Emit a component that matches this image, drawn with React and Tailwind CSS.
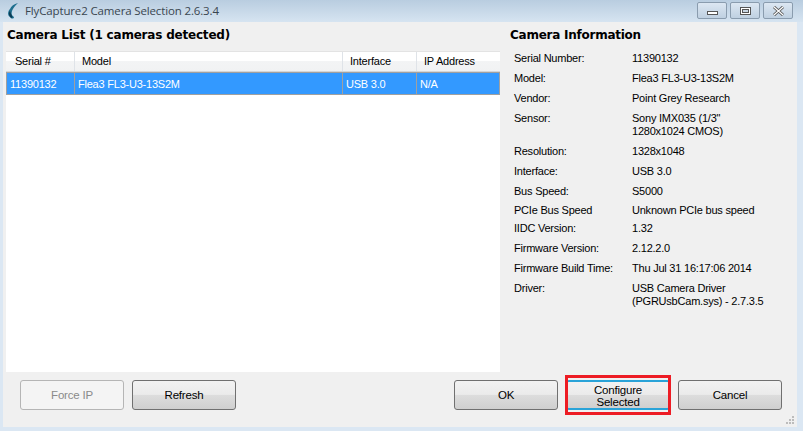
import React from "react";

const rows = [
  ["Serial Number:", "11390132", "h-[20px]"],
  ["Model:", "Flea3 FL3-U3-13S2M", "h-[20px]"],
  ["Vendor:", "Point Grey Research", "h-[20px]"],
  ["Sensor:", ["Sony IMX035 (1/3\"", "1280x1024 CMOS)"], "h-[33px]"],
  ["Resolution:", "1328x1048", "h-[20px]"],
  ["Interface:", "USB 3.0", "h-[20px]"],
  ["Bus Speed:", "S5000", "h-[19px]"],
  ["PCIe Bus Speed", "Unknown PCIe bus speed", "h-[18px]"],
  ["IIDC Version:", "1.32", "h-[20px]"],
  ["Firmware Version:", "2.12.2.0", "h-[20px]"],
  ["Firmware Build Time:", "Thu Jul 31 16:17:06 2014", "h-[20px]"],
  ["Driver:", ["USB Camera Driver", "(PGRUsbCam.sys) - 2.7.3.5"], "h-[33px]"],
];

const WinButton = ({ children, disabled, className = "" }) => (
  <button
    disabled={disabled}
    className={`h-[30px] w-[104px] rounded-[3px] border text-[11.5px] leading-[12px] tracking-[-0.2px] ${
      disabled
        ? "border-[#b5b5b5] bg-[#f4f4f4] text-[#8a8a8a]"
        : "border-[#707070] bg-[linear-gradient(#f2f2f2_0%,#ebebeb_48%,#dddddd_50%,#cfcfcf_100%)] text-black"
    } ${className}`}
  >
    {children}
  </button>
);

const CaptionButton = ({ children }) => (
  <div className="flex h-[17px] w-[30px] items-center justify-center rounded-[2px] border border-[#8a9cae] bg-[linear-gradient(#dce7f2,#bfd0e1)]">
    {children}
  </div>
);

export default function App() {
  return (
    <div className="flex h-[431px] w-[803px] flex-col overflow-hidden bg-[#dbe7f3] font-['Liberation_Sans',sans-serif] text-[11px] tracking-[-0.22px] text-black">
      <div className="flex h-[22px] shrink-0 items-center bg-[linear-gradient(#b9cde0,#d6e4f1)] pl-[7px] pr-[10px]">
        <svg width="12" height="16" viewBox="0 0 12 16" className="mr-[6px]">
          <path d="M11 0 C7 1 4 3 3 6 C1 8 0 12 3 14 C4 16 7 16 7 14 C5 13 4 11 5 8 C6 5 8 3 11 0Z" fill="#1f6f8f" />
          <path d="M3 8 C1 10 2 14 5 15 C6 14 5 13 4 11Z" fill="#0b3c55" />
        </svg>
        <span className="font-['Open_Sans',sans-serif] text-[11.5px] tracking-[-0.14px] text-[#3a4650]">
          FlyCapture2 Camera Selection 2.6.3.4
        </span>
        <div className="mb-[1px] ml-auto flex gap-[3px]">
          <CaptionButton>
            <div className="mt-[5px] h-[4px] w-[11px] border border-[#555] bg-white" />
          </CaptionButton>
          <CaptionButton>
            <div className="flex h-[8px] w-[11px] items-center justify-center border border-[#555] bg-white">
              <div className="h-[4px] w-[7px] border border-[#555] bg-[#c8d5e2]" />
            </div>
          </CaptionButton>
          <CaptionButton>
            <svg width="13" height="10" viewBox="0 0 13 10">
              <path d="M2 1 L11 9 M11 1 L2 9" stroke="#555" strokeWidth="3" />
              <path d="M2 1 L11 9 M11 1 L2 9" stroke="#fff" strokeWidth="1.2" />
            </svg>
          </CaptionButton>
        </div>
      </div>

      <div className="relative mx-[3px] flex h-[405px] w-[794px] flex-col bg-[#f0f0f0]">
        <div className="flex h-[350px]">
          <div className="ml-[3px] flex w-[494px] flex-col">
            <h2 className="flex h-[29px] items-center pb-[3px] pl-[1px] font-['DejaVu_Sans',sans-serif] text-[12px] font-bold tracking-[-0.2px]">
              Camera List (1 cameras detected)
            </h2>
            <div className="flex-1 bg-white">
              <div className="grid h-[21px] grid-cols-[69px_268px_74px_83px] border-b border-t border-b-[#d5d5d5] border-t-[#e3e3e3] bg-[linear-gradient(#ffffff_0%,#ffffff_45%,#f3f4f5_50%,#f1f2f3_100%)] leading-[19px]">
                <div className="border-r border-[#dfe3e8] pl-[9px]">Serial #</div>
                <div className="border-r border-[#dfe3e8] pl-[7px]">Model</div>
                <div className="border-r border-[#dfe3e8] pl-[7px]">Interface</div>
                <div className="pl-[7px]">IP Address</div>
              </div>
              <div className="grid h-[23px] grid-cols-[68px_268px_74px_82px] border border-[#a0a0a0] bg-[#3399ff] leading-[22px] text-white">
                <div className="border-r border-[#a0a0a0] pl-[3px]">11390132</div>
                <div className="border-r border-[#a0a0a0] pl-[3px]">Flea3 FL3-U3-13S2M</div>
                <div className="border-r border-[#a0a0a0] pl-[3px]">USB 3.0</div>
                <div className="pl-[3px]">N/A</div>
              </div>
            </div>
          </div>

          <div className="pl-[10px]">
            <h2 className="flex h-[25px] items-center pt-[1px] font-['DejaVu_Sans',sans-serif] text-[12px] font-bold tracking-[-0.25px]">
              Camera Information
            </h2>
            <div className="pl-[4px] pt-[5px] leading-[13px]">
              {rows.map(([label, value, height]) => (
                <div key={label} className={`flex ${height}`}>
                  <div className="w-[118px] shrink-0">{label}</div>
                  <div>
                    {Array.isArray(value)
                      ? value.map((line) => <div key={line}>{line}</div>)
                      : value}
                  </div>
                </div>
              ))}
            </div>
          </div>
        </div>

        <div className="flex gap-[8px] pl-[17px] pt-[8px]">
          <WinButton disabled>Force IP</WinButton>
          <WinButton>Refresh</WinButton>
          <WinButton className="ml-[210px]">OK</WinButton>
          <div className="relative">
            <WinButton className="border-x-[#707070] border-y-2 border-y-[#29a3d8] pt-[1px]">
              Configure
              <br />
              Selected
            </WinButton>
            <div className="pointer-events-none absolute -bottom-[5px] -left-[1px] -right-[1px] -top-[5px] border-[3px] border-[#ed1c24]" />
          </div>
          <WinButton>Cancel</WinButton>
        </div>

        <svg width="10" height="10" viewBox="0 0 10 10" className="absolute bottom-[2px] right-[2px]">
          <path d="M7 1h2v2h-2zM4 4h2v2h-2zM7 4h2v2h-2zM1 7h2v2h-2zM4 7h2v2h-2zM7 7h2v2h-2z" fill="#bcbcbc" />
        </svg>
      </div>
    </div>
  );
}
